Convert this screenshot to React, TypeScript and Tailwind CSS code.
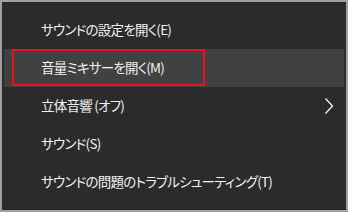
import React from "react";

const rows = [
  { label: "サウンドの設定を開く(E)" },
  { label: "音量ミキサーを開く(M)", active: true },
  { label: "立体音響 (オフ)", sub: true },
  { label: "サウンド(S)" },
  { label: "サウンドの問題のトラブルシューティング(T)" },
];

export default function App() {
  return (
    <div
      className="w-[348px] h-[212px] border-2 border-[#a0a0a0] bg-[#2b2b2b] pt-[9px] px-[2px] text-[#f2f2f2] text-[13.5px] tracking-[-0.75px] [font-feature-settings:'palt']"
      style={{ fontFamily: '"Noto Sans CJK JP", "Noto Sans", sans-serif' }}
    >
      {rows.map((r, i) => (
        <div
          key={i}
          className={`relative h-[38px] flex items-center pl-[37px] ${r.active ? "bg-[#414141]" : ""}`}
        >
          <span className="leading-none">{r.label}</span>
          {r.active && (
            <div className="absolute left-[8px] top-0 w-[193px] h-[37px] border-2 border-[#e81123]" />
          )}
          {r.sub && (
            <svg
              className="absolute right-[10px] top-[10px]"
              width="10"
              height="18"
              viewBox="0 0 10 18"
              fill="none"
            >
              <path d="M1.5 1.5 L8.5 9 L1.5 16.5" stroke="#ffffff" strokeWidth="1.2" />
            </svg>
          )}
        </div>
      ))}
    </div>
  );
}
